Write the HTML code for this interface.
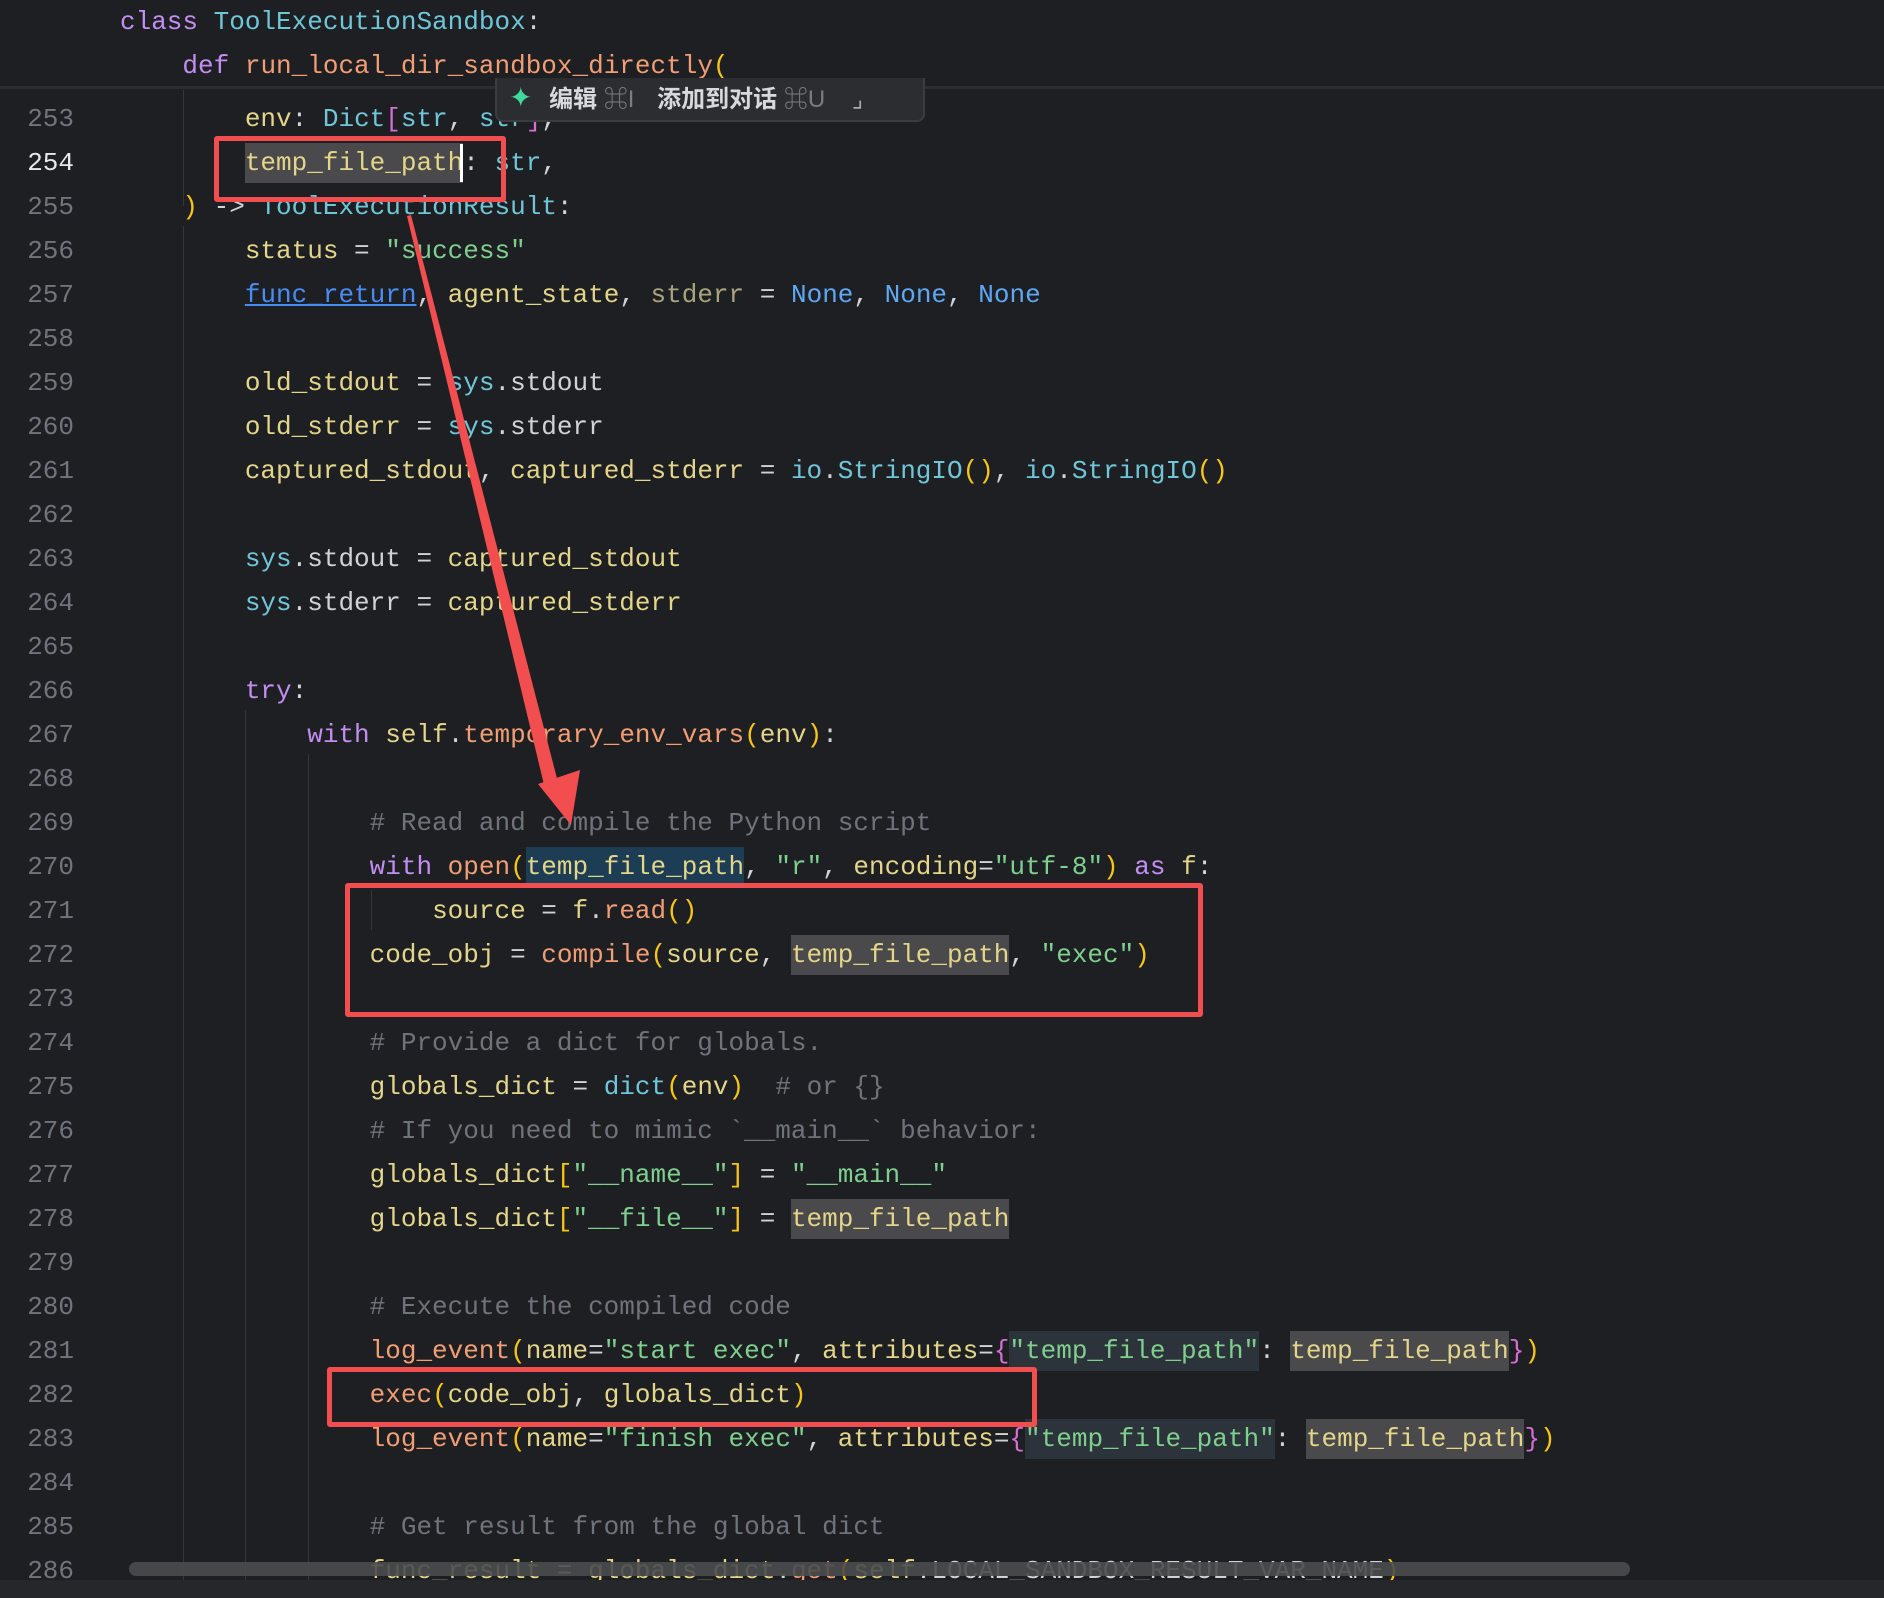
<!DOCTYPE html>
<html><head><meta charset="utf-8"><style>
body{margin:0;width:1884px;height:1598px;background:#1e1f22;overflow:hidden;position:relative;font-family:"Liberation Mono",monospace;}
.code{position:absolute;left:120px;font-size:26px;line-height:44px;white-space:pre;color:#cfd2d6;}
.ln{position:absolute;left:0;width:74px;text-align:right;font-size:26px;line-height:44px;color:#70747b;font-family:"Liberation Mono",monospace;}
.k{color:#c38ef2}.f{color:#f29e74}.v{color:#e3d58a}.s{color:#7fcf8f}.c{color:#6f737a}.b{color:#f5c518}.m{color:#d56fd5}.n{color:#5fa8f5}.t{color:#6fc6d8}.o{color:#a8a47e}
.u{color:#4a8cf5;text-decoration:underline}
.h{background:#4a4a4c;display:inline-block;line-height:40px}
.hb{background:#1d3d55;display:inline-block;line-height:40px}
.hs{background:#2d333a;display:inline-block;line-height:40px}
.box{position:absolute;border:5px solid #f24e50;border-radius:3px;}
.guide{position:absolute;width:1px;background:#34363a;}
</style></head><body>
<div style="position:absolute;left:0;top:0;width:1884px;height:86px;background:#1e1f22;border-bottom:3px solid #2b2d30;"></div>
<div class="code" style="top:0px;"><span class="k">class</span> <span class="t">ToolExecutionSandbox</span>:
    <span class="k">def</span> <span class="f">run_local_dir_sandbox_directly</span><span class="b">(</span></div>

<div class="guide" style="left:183px;top:90px;height:116px"></div>
<div class="guide" style="left:183px;top:226px;height:1354px"></div>
<div class="guide" style="left:245px;top:710px;height:870px"></div>
<div class="guide" style="left:308px;top:754px;height:826px"></div>
<div class="guide" style="left:371px;top:890px;height:40px"></div>

<div class="ln" style="top:97px;line-height:44px;">253<br><span style="color:#e6e7e9">254</span><br>255<br>256<br>257<br>258<br>259<br>260<br>261<br>262<br>263<br>264<br>265<br>266<br>267<br>268<br>269<br>270<br>271<br>272<br>273<br>274<br>275<br>276<br>277<br>278<br>279<br>280<br>281<br>282<br>283<br>284<br>285<br>286</div>

<div class="code" style="top:97px;">        <span class="v">env</span>: <span class="t">Dict</span><span class="m">[</span><span class="t">str</span>, <span class="t">str</span><span class="m">]</span>,
        <span class="h v">temp_file_path</span><span style="display:inline-block;width:3px;height:38px;background:#fff;vertical-align:middle;margin-left:-3px"></span>: <span class="t">str</span>,
    <span class="b">)</span> -&gt; <span class="t">ToolExecutionResult</span>:
        <span class="v">status</span> = <span class="s">"success"</span>
        <span class="u">func_return</span>, <span class="v">agent_state</span>, <span class="o">stderr</span> = <span class="n">None</span>, <span class="n">None</span>, <span class="n">None</span>

        <span class="v">old_stdout</span> = <span class="t">sys</span>.stdout
        <span class="v">old_stderr</span> = <span class="t">sys</span>.stderr
        <span class="v">captured_stdout</span>, <span class="v">captured_stderr</span> = <span class="t">io</span>.<span class="t">StringIO</span><span class="b">()</span>, <span class="t">io</span>.<span class="t">StringIO</span><span class="b">()</span>

        <span class="t">sys</span>.stdout = <span class="v">captured_stdout</span>
        <span class="t">sys</span>.stderr = <span class="v">captured_stderr</span>

        <span class="k">try</span>:
            <span class="k">with</span> <span class="v">self</span>.<span class="f">temporary_env_vars</span><span class="b">(</span><span class="v">env</span><span class="b">)</span>:

                <span class="c"># Read and compile the Python script</span>
                <span class="k">with</span> <span class="f">open</span><span class="b">(</span><span class="hb v">temp_file_path</span>, <span class="s">"r"</span>, <span class="v">encoding</span>=<span class="s">"utf-8"</span><span class="b">)</span> <span class="k">as</span> <span class="v">f</span>:
                    <span class="v">source</span> = <span class="v">f</span>.<span class="f">read</span><span class="b">()</span>
                <span class="v">code_obj</span> = <span class="f">compile</span><span class="b">(</span><span class="v">source</span>, <span class="h v">temp_file_path</span>, <span class="s">"exec"</span><span class="b">)</span>

                <span class="c"># Provide a dict for globals.</span>
                <span class="v">globals_dict</span> = <span class="t">dict</span><span class="b">(</span><span class="v">env</span><span class="b">)</span>  <span class="c"># or {}</span>
                <span class="c"># If you need to mimic `__main__` behavior:</span>
                <span class="v">globals_dict</span><span class="b">[</span><span class="s">"__name__"</span><span class="b">]</span> = <span class="s">"__main__"</span>
                <span class="v">globals_dict</span><span class="b">[</span><span class="s">"__file__"</span><span class="b">]</span> = <span class="h v">temp_file_path</span>

                <span class="c"># Execute the compiled code</span>
                <span class="f">log_event</span><span class="b">(</span><span class="v">name</span>=<span class="s">"start exec"</span>, <span class="v">attributes</span>=<span class="m">{</span><span class="hs s">"temp_file_path"</span>: <span class="h v">temp_file_path</span><span class="m">}</span><span class="b">)</span>
                <span class="f">exec</span><span class="b">(</span><span class="v">code_obj</span>, <span class="v">globals_dict</span><span class="b">)</span>
                <span class="f">log_event</span><span class="b">(</span><span class="v">name</span>=<span class="s">"finish exec"</span>, <span class="v">attributes</span>=<span class="m">{</span><span class="hs s">"temp_file_path"</span>: <span class="h v">temp_file_path</span><span class="m">}</span><span class="b">)</span>

                <span class="c"># Get result from the global dict</span>
                <span class="v">func_result</span> = <span class="v">globals_dict</span>.<span class="f">get</span><span class="b">(</span><span class="v">self</span>.LOCAL_SANDBOX_RESULT_VAR_NAME<span class="b">)</span></div>

<div style="position:absolute;left:495px;top:78px;width:426px;height:42px;background:#2b2d30;border:2px solid #3a3c40;border-top:none;border-radius:0 0 8px 8px;font-family:'Liberation Sans','Noto Sans CJK SC',sans-serif;font-size:24px;color:#d8d9db;line-height:40px;white-space:nowrap;">
<span style="color:#3fd99a;margin-left:12px;font-size:28px">✦</span>
<span style="margin-left:10px;font-weight:bold">编辑</span> <span style="color:#7a7d82">⌘I</span>
<span style="margin-left:16px;font-weight:bold">添加到对话</span> <span style="color:#7a7d82">⌘U</span>
<span style="margin-left:20px;color:#aaa">⌟</span></div>

<svg style="position:absolute;left:0;top:0" width="1884" height="1598">
<polygon points="407,216 411,215 560,790 546,793" fill="#f24e50"/>
<polygon points="538,784 580,770 571,825" fill="#f24e50"/>
</svg>

<div class="box" style="left:214px;top:136px;width:282px;height:56px"></div>
<div class="box" style="left:345px;top:883px;width:848px;height:124px"></div>
<div class="box" style="left:327px;top:1367px;width:700px;height:50px"></div>

<div style="position:absolute;left:129px;top:1562px;width:1501px;height:14px;background:#4a4b4e;border-radius:7px;opacity:0.9"></div>
<div style="position:absolute;left:0;top:1580px;width:1884px;height:18px;background:#26272b"></div>
</body></html>
